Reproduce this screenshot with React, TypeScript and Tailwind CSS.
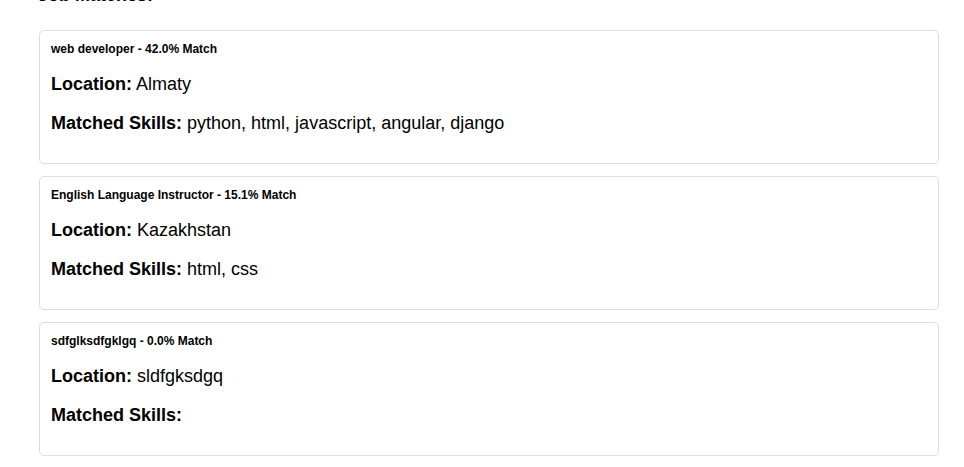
import React from "react";

const jobs = [
  { title: "web developer", match: "42.0", location: "Almaty", skills: "python, html, javascript, angular, django" },
  { title: "English Language Instructor", match: "15.1", location: "Kazakhstan", skills: "html, css" },
  { title: "sdfglksdfgklgq", match: "0.0", location: "sldfgksdgq", skills: "" },
];

export default function App() {
  return (
    <div className="bg-white w-[964px] h-[467px] overflow-hidden text-black" style={{ fontFamily: '"Liberation Sans", Arial, sans-serif' }}>
      <div className="ml-[39px] w-[900px]">
        <h2 className="text-[18px] font-bold leading-[20px] mt-[-15px] ml-[-1px]">Job Matches:</h2>
        <div className="mt-[25px] flex flex-col gap-[12px]">
          {jobs.map((j) => (
            <div key={j.title} className="border border-[#dddddd] rounded-[5px] pt-[11px] pb-[11px] px-[11px]">
              <h3 className="text-[12px] font-bold leading-[14px]">
                {j.title} - {j.match}% Match
              </h3>
              <p className="text-[18px] leading-[21px] mt-[18px]">
                <strong>Location:</strong> {j.location}
              </p>
              <p className="text-[18px] leading-[21px] mt-[18px] mb-[18px]">
                <strong>Matched Skills:</strong> {j.skills}
              </p>
            </div>
          ))}
        </div>
      </div>
    </div>
  );
}
